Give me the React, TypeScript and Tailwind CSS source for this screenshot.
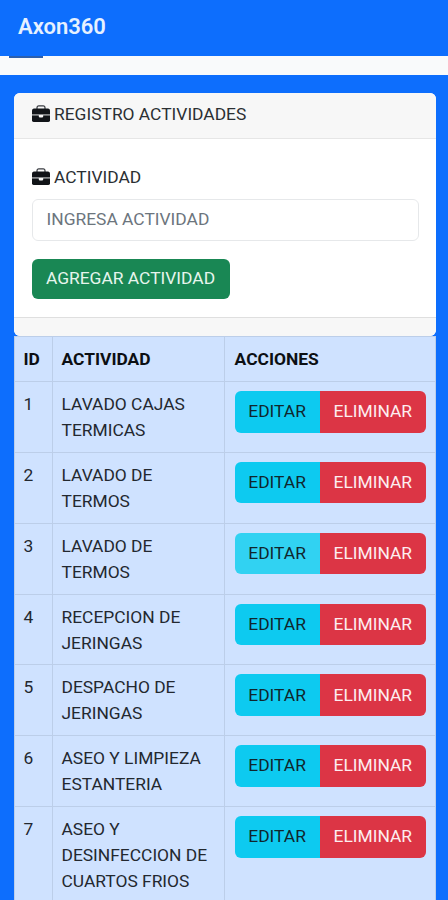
const actividades = [
  { id: 1, lines: ['LAVADO CAJAS', 'TERMICAS'] },
  { id: 2, lines: ['LAVADO DE', 'TERMOS'] },
  { id: 3, lines: ['LAVADO DE', 'TERMOS'], active: true },
  { id: 4, lines: ['RECEPCION DE', 'JERINGAS'] },
  { id: 5, lines: ['DESPACHO DE', 'JERINGAS'] },
  { id: 6, lines: ['ASEO Y LIMPIEZA', 'ESTANTERIA'] },
  { id: 7, lines: ['ASEO Y', 'DESINFECCION DE', 'CUARTOS FRIOS'] },
]

function BriefcaseIcon() {
  return (
    <svg width="18" height="18" viewBox="0 0 18 18" aria-hidden="true" className="shrink-0">
      <path d="M5 4.2V2.8Q5 0.8 6.8 0.8H11.2Q13 0.8 13 2.8V4.2" fill="none" stroke="#3a3d42" strokeWidth="1.2" />
      <path d="M2 3.4H16Q17.8 3.4 18 5.2V9.4H0V5.2Q0.2 3.4 2 3.4Z" fill="#111418" />
      <path d="M0 9.4H18V10.6H0Z" fill="#8b8d90" />
      <path d="M0 10.6H18V15.6Q18 17 16.4 17H1.6Q0 17 0 15.6Z" fill="#111418" />
      <path d="M6.8 10H11.2V11.6Q11.2 12.4 10.4 12.4H7.6Q6.8 12.4 6.8 11.6Z" fill="#f7f7f7" />
    </svg>
  )
}

function Acciones({ active }: { active?: boolean }) {
  return (
    <div className="flex h-[41.5px] w-[191.5px] overflow-hidden rounded-[6px]">
      <button className={`w-[85px] pb-px text-[#10262d] ${active ? 'bg-[#31d2f2]' : 'bg-[#0dcaf0]'}`}>EDITAR</button>
      <button className="flex-1 bg-[#dc3545] pb-px text-[#fdeef0]">ELIMINAR</button>
    </div>
  )
}

export default function App() {
  return (
    <div className="flex h-[900px] w-[448px] flex-col overflow-hidden bg-[#0d6efd] font-['Roboto',sans-serif] text-[17.4px] leading-[26px] text-[#2b2f33]">
      <header className="flex h-[55.5px] shrink-0 items-center pb-[2px] pl-[18px] text-[22px] font-semibold text-[#e6f1ff]">
        Axon360
      </header>
      <div className="h-[19.5px] shrink-0 bg-[#f9fafb] pl-[9px]">
        <div className="h-[2.5px] w-[34px] bg-[#2b5fae]" />
      </div>

      <main className="mt-[17.5px] ml-[13.5px] w-[422.5px] shrink-0">
        <section className="h-[243.5px] overflow-hidden rounded-[6px] bg-white">
          <div className="flex h-[46px] items-center gap-1 border-b border-[#e6e6e6] bg-[#f7f7f7] pb-[2px] pl-[18.5px]">
            <BriefcaseIcon />
            <h1>REGISTRO ACTIVIDADES</h1>
          </div>
          <div className="h-[178.5px] px-[18.5px] pt-[25px]">
            <label className="flex items-center gap-1" htmlFor="actividad">
              <BriefcaseIcon />
              ACTIVIDAD
            </label>
            <input
              id="actividad"
              placeholder="INGRESA ACTIVIDAD"
              className="mt-[9px] block h-[42px] w-[386.5px] rounded-[6px] border border-[#e6e8ea] bg-white px-[13.5px] pb-px placeholder:text-[#6c757d]"
            />
            <button className="mt-[18px] block h-[40.5px] w-[198px] rounded-[6px] bg-[#198754] pr-px pb-px whitespace-nowrap text-[#e6f5ed]">
              AGREGAR ACTIVIDAD
            </button>
          </div>
          <div className="h-[19px] border-t border-[#dfdfdf] bg-[#f7f7f7]" />
        </section>

        <section className="border border-[#bccee9] bg-[#cfe2ff] text-[#23282f]">
          <div className="grid h-[45px] grid-cols-[38px_172.5px_1fr] border-b border-[#bccee9] font-bold text-[#0c0f13]">
            <div className="border-r border-[#bccee9] pt-[8.6px] pl-[9px]">ID</div>
            <div className="border-r border-[#bccee9] pt-[8.6px] pl-[9px]">ACTIVIDAD</div>
            <div className="pt-[8.6px] pl-[9.6px]">ACCIONES</div>
          </div>
          {actividades.map(({ id, lines, active }) => (
            <div key={id} className="grid min-h-[70.85px] grid-cols-[38px_172.5px_1fr] border-b border-[#bccee9]">
              <div className="border-r border-[#bccee9] pt-[9px] pl-[9px]">{id}</div>
              <div className="border-r border-[#bccee9] pt-[9px] pb-[8px] pl-[9px]">
                {lines.map((line) => (
                  <p key={line}>{line}</p>
                ))}
              </div>
              <div className="pt-[9px] pl-[9.6px]">
                <Acciones active={active} />
              </div>
            </div>
          ))}
        </section>
      </main>
    </div>
  )
}
